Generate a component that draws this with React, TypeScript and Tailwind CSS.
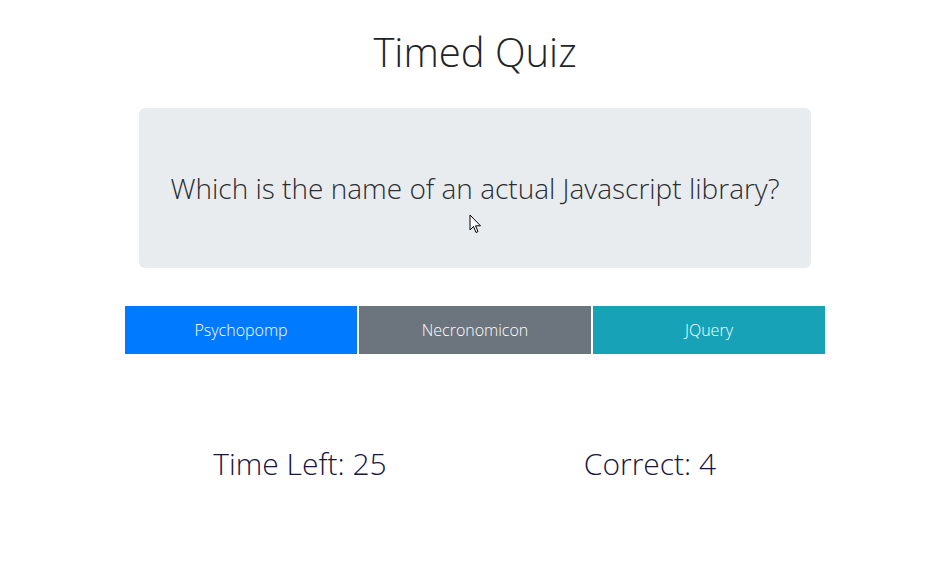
const answers = [
  { label: 'Psychopomp', color: 'bg-[#007bff]' },
  { label: 'Necronomicon', color: 'bg-[#6c757d]' },
  { label: 'JQuery', color: 'bg-[#17a2b8]' },
]

function Cursor() {
  return (
    <svg className="absolute left-[469px] top-[214px]" width="14" height="21" viewBox="0 0 14 21">
      <path d="M1 1 L1 16 L4.5 12.5 L7 18.5 L9 17.6 L6.6 11.8 L11.5 11.8 Z" fill="#fff" stroke="#000" strokeWidth="1" strokeLinejoin="round" />
    </svg>
  )
}

export default function App() {
  return (
    <div className="relative w-[952px] h-[566px] bg-white font-['Open_Sans',sans-serif] font-light">
      <div className="w-[700px] ml-[125px] flex flex-col">
        <h1 className="text-center text-[40px] leading-[48px] text-[#212529] pt-[28px]">Timed Quiz</h1>
        <div className="mt-[32px] mx-[14px] h-[160px] rounded-md bg-[#e9ecef] flex items-center justify-center">
          <p className="text-[28px] leading-[34px] text-[#2a2e33]">Which is the name of an actual Javascript library?</p>
        </div>
        <div className="mt-[38px] grid grid-cols-3 gap-[2px]">
          {answers.map((a) => (
            <button key={a.label} className={`${a.color} h-[48px] text-white text-base font-light`}>
              {a.label}
            </button>
          ))}
        </div>
        <div className="mt-[92px] grid grid-cols-2 text-[30px] leading-[36px] text-[#161640]">
          <div className="text-center">Time Left: 25</div>
          <div className="text-center">Correct: 4</div>
        </div>
      </div>
      <Cursor />
    </div>
  )
}
